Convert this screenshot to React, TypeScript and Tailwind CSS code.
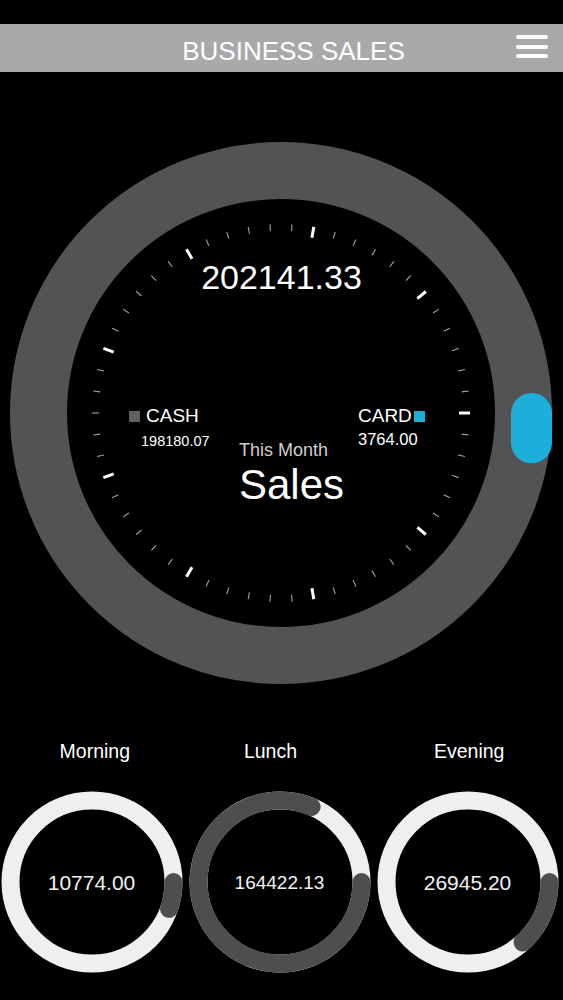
import React from 'react';

const TOTAL = 202141.33;
const CARD = 3764.0;
const CASH = 198180.07;

const SHIFTS = [
  { label: 'Morning', value: 10774.0, size: 'text-[21px]' },
  { label: 'Lunch', value: 164422.13, size: 'text-[19px]' },
  { label: 'Evening', value: 26945.2, size: 'text-[21px]' },
];

const FONT = 'font-["Liberation_Sans",Arial,sans-serif]';

// angles measured clockwise from 3 o'clock
function arcPath(cx: number, cy: number, r: number, from: number, to: number) {
  const rad = (d: number) => (d * Math.PI) / 180;
  const x0 = cx + r * Math.cos(rad(from));
  const y0 = cy + r * Math.sin(rad(from));
  const x1 = cx + r * Math.cos(rad(to));
  const y1 = cy + r * Math.sin(rad(to));
  const large = to - from > 180 ? 1 : 0;
  return `M ${x0} ${y0} A ${r} ${r} 0 ${large} 1 ${x1} ${y1}`;
}

function Dial() {
  const cx = 281;
  const cy = 341;
  const ticks = Array.from({ length: 54 }, (_, i) => {
    const major = i % 6 === 0;
    const a = ((10 + (i * 40) / 6) * Math.PI) / 180; // from top, clockwise
    const r0 = major ? 178 : 182;
    const r1 = 189;
    return (
      <line
        key={i}
        x1={cx + r0 * Math.sin(a)}
        y1={cy - r0 * Math.cos(a)}
        x2={cx + r1 * Math.sin(a)}
        y2={cy - r1 * Math.cos(a)}
        stroke={major ? '#ffffff' : '#a3a3a3'}
        strokeWidth={major ? 3 : 1.1}
      />
    );
  });
  // card share: knob sits just below 3 o'clock
  const cardDeg = (CARD / TOTAL) * 360;
  const knobLen = 41 + (251 * cardDeg * Math.PI) / 180;

  return (
    <svg width="563" height="652" viewBox="0 0 563 652" className="absolute inset-0">
      <circle cx={cx} cy={cy} r={242.5} fill="none" stroke="#535254" strokeWidth={57} />
      {ticks}
      <rect x={511} y={321} width={41} height={knobLen} rx={20.5} fill="#1cafd9" />
    </svg>
  );
}

function ShiftRing({ value, size }: { value: number; size: string }) {
  const deg = (value / TOTAL) * 360;
  return (
    <div className="relative w-[182px] h-[182px] shrink-0">
      <svg width="182" height="182" viewBox="0 0 182 182" className="absolute inset-0">
        <circle cx={91} cy={91} r={81.5} fill="none" stroke="#efeef0" strokeWidth={18} />
        <path
          d={arcPath(91, 91, 81.5, 0, deg)}
          fill="none"
          stroke="#4e4d4f"
          strokeWidth={18}
          strokeLinecap="round"
        />
      </svg>
      <div className={`absolute inset-0 flex items-center justify-center text-[#f2f2f2] leading-none ${size}`}>
        {value.toFixed(2)}
      </div>
    </div>
  );
}

export default function App() {
  return (
    <div className={`w-[563px] h-[1000px] bg-black text-white overflow-hidden ${FONT}`}>
      <div className="h-[24px]" />

      {/* Title bar */}
      <div className="relative h-[48px] bg-[#a9a8aa] flex items-center justify-center pl-[24px] pt-[6px]">
        <h1 className="text-[26px] leading-none font-normal text-white">BUSINESS SALES</h1>
        <button className="absolute right-[15px] top-[11px] flex flex-col gap-[5.5px]">
          <span className="block w-[32px] h-[4px] rounded-full bg-white" />
          <span className="block w-[32px] h-[4px] rounded-full bg-white" />
          <span className="block w-[32px] h-[4px] rounded-full bg-white" />
        </button>
      </div>

      {/* Monthly dial */}
      <div className="relative h-[652px]">
        <Dial />
        <div className="absolute left-0 right-0 top-[188px] text-center text-[34px] leading-none">
          {TOTAL.toFixed(2)}
        </div>

        <div className="absolute left-[129px] top-[334px] flex flex-col">
          <div className="flex items-end gap-[6px]">
            <span className="block w-[11px] h-[11px] bg-[#606062] mb-[3px]" />
            <span className="text-[19px] leading-none">CASH</span>
          </div>
          <span className="pl-[12px] mt-[9px] text-[14.5px] leading-none">{CASH.toFixed(2)}</span>
        </div>

        <div className="absolute left-[358px] top-[334px] flex flex-col">
          <div className="flex items-end gap-[2px]">
            <span className="text-[19px] leading-none">CARD</span>
            <span className="block w-[11px] h-[11px] bg-[#1cafd9] mb-[3px]" />
          </div>
          <span className="mt-[6px] text-[16.5px] leading-none">{CARD.toFixed(2)}</span>
        </div>

        <div className="absolute left-[239px] top-[369px] flex flex-col">
          <span className="text-[18px] leading-none text-[#cfcfcf]">This Month</span>
          <span className="mt-[5px] text-[42px] leading-none">Sales</span>
        </div>
      </div>

      {/* Shift labels */}
      <div className="flex h-[56px] items-center text-[19.5px] leading-none">
        <span className="w-[190px] text-center">Morning</span>
        <span className="w-[162px] text-center">Lunch</span>
        <span className="ml-[24px] w-[188px] text-center">Evening</span>
      </div>

      {/* Shift rings */}
      <div className="flex gap-[6px] pt-[11px] pl-[0.5px]">
        {SHIFTS.map((s) => (
          <ShiftRing key={s.label} value={s.value} size={s.size} />
        ))}
      </div>
    </div>
  );
}
